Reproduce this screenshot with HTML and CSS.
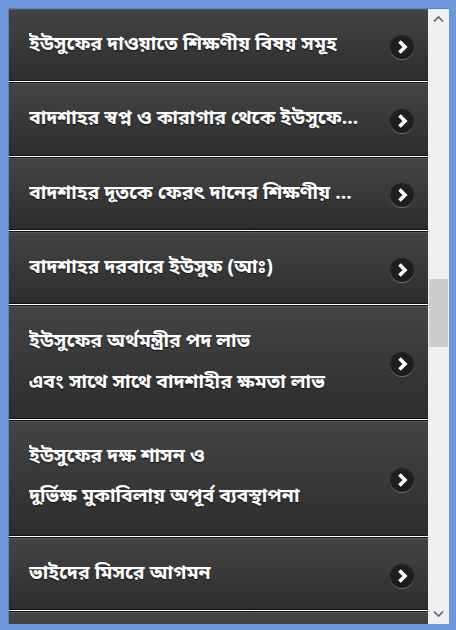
FILE: index.html
```html
<!DOCTYPE html>
<html lang="bn">
<head>
<meta charset="utf-8" />
<title>ইউসুফ (আঃ)</title>
<link rel="stylesheet" href="styles.css">
</head>
<body>
<div class="window">
	<div class="pane">
		<ul class="list">
			<li class="item">
				<div class="title"><span>ইউসুফের দাওয়াতে শিক্ষণীয় বিষয় সমূহ</span></div>
				<span class="arrow"><svg viewBox="0 0 24 24" width="24" height="24"><path d="M9.5 6.5 L15 12 L9.5 17.5" /></svg></span>
			</li>
			<li class="item">
				<div class="title"><span>বাদশাহর স্বপ্ন ও কারাগার থেকে ইউসুফের মুক্তি</span></div>
				<span class="arrow"><svg viewBox="0 0 24 24" width="24" height="24"><path d="M9.5 6.5 L15 12 L9.5 17.5" /></svg></span>
			</li>
			<li class="item">
				<div class="title"><span>বাদশাহর দূতকে ফেরৎ দানের শিক্ষণীয় দিক</span></div>
				<span class="arrow"><svg viewBox="0 0 24 24" width="24" height="24"><path d="M9.5 6.5 L15 12 L9.5 17.5" /></svg></span>
			</li>
			<li class="item">
				<div class="title"><span>বাদশাহর দরবারে ইউসুফ (আঃ)</span></div>
				<span class="arrow"><svg viewBox="0 0 24 24" width="24" height="24"><path d="M9.5 6.5 L15 12 L9.5 17.5" /></svg></span>
			</li>
			<li class="item">
				<div class="title">
					<span>ইউসুফের অর্থমন্ত্রীর পদ লাভ</span>
					<span>এবং সাথে সাথে বাদশাহীর ক্ষমতা লাভ</span>
				</div>
				<span class="arrow"><svg viewBox="0 0 24 24" width="24" height="24"><path d="M9.5 6.5 L15 12 L9.5 17.5" /></svg></span>
			</li>
			<li class="item">
				<div class="title">
					<span>ইউসুফের দক্ষ শাসন ও</span>
					<span class="deep">দুর্ভিক্ষ মুকাবিলায় অপূর্ব ব্যবস্থাপনা</span>
				</div>
				<span class="arrow"><svg viewBox="0 0 24 24" width="24" height="24"><path d="M9.5 6.5 L15 12 L9.5 17.5" /></svg></span>
			</li>
			<li class="item">
				<div class="title"><span>ভাইদের মিসরে আগমন</span></div>
				<span class="arrow"><svg viewBox="0 0 24 24" width="24" height="24"><path d="M9.5 6.5 L15 12 L9.5 17.5" /></svg></span>
			</li>
			<li class="item item-empty"></li>
		</ul>
		<div class="scrollbar">
			<div class="sb-btn"><svg viewBox="0 0 21 21" width="21" height="21"><path d="M6 12.5 L10.5 8 L15 12.5" /></svg></div>
			<div class="sb-track"><div class="sb-thumb"></div></div>
			<div class="sb-btn"><svg viewBox="0 0 21 21" width="21" height="21"><path d="M6 8.5 L10.5 13 L15 8.5" /></svg></div>
		</div>
	</div>
</div>
</body>
</html>
```
FILE: styles.css
```css
*{box-sizing:border-box;}
html, body{margin:0; padding:0; height:100%;}
body{background:#6f97db; font-family:"Noto Sans Bengali", "Lohit Bengali", "Vrinda", "Noto Sans", sans-serif;}
.window{height:630px; padding:8px 7px 6px 8px;}
.pane{display:flex; height:616px; border-top:1px solid #5b80c4; border-left:1px solid #5b80c4; background:#2d2d2d;}
.list{flex:1; min-width:0; margin:0; padding:0; list-style:none; overflow:hidden;}
.item{display:flex; align-items:center; padding:15px 14px 15px 20px; margin-bottom:2px; background:#333; background-image:linear-gradient(#444, #2d2d2d); border-top:1px solid #595959; border-bottom:1px solid #111; box-shadow:0 1px 0 #fff, 0 2px 0 #111;}
.item-empty{height:72px;}
.title{flex:1; min-width:0; padding-right:28px; color:#fff; font-size:19.5px; font-weight:bold; line-height:40.33px; text-shadow:0 1px 1px #111;}
.title span{display:block; white-space:nowrap; overflow:hidden; text-overflow:ellipsis;}
.title .deep{padding-bottom:2.5px;}
.arrow{flex:none; width:24px; height:24px; border-radius:50%; background:rgba(0,0,0,.45); box-shadow:0 1px 0 rgba(255,255,255,.3); margin-top:3px;}
.arrow svg{display:block;}
.arrow path{fill:none; stroke:#fff; stroke-width:3.6; stroke-linejoin:miter;}
.scrollbar{flex:none; width:21px; display:flex; flex-direction:column; background:#f0f0f0;}
.sb-btn{height:21px;}
.sb-btn svg{display:block;}
.sb-btn path{fill:none; stroke:#606060; stroke-width:1.6;}
.sb-track{flex:1; padding:0 1px;}
.sb-thumb{margin-top:249px; height:68px; background:#cdcdcd;}
```
